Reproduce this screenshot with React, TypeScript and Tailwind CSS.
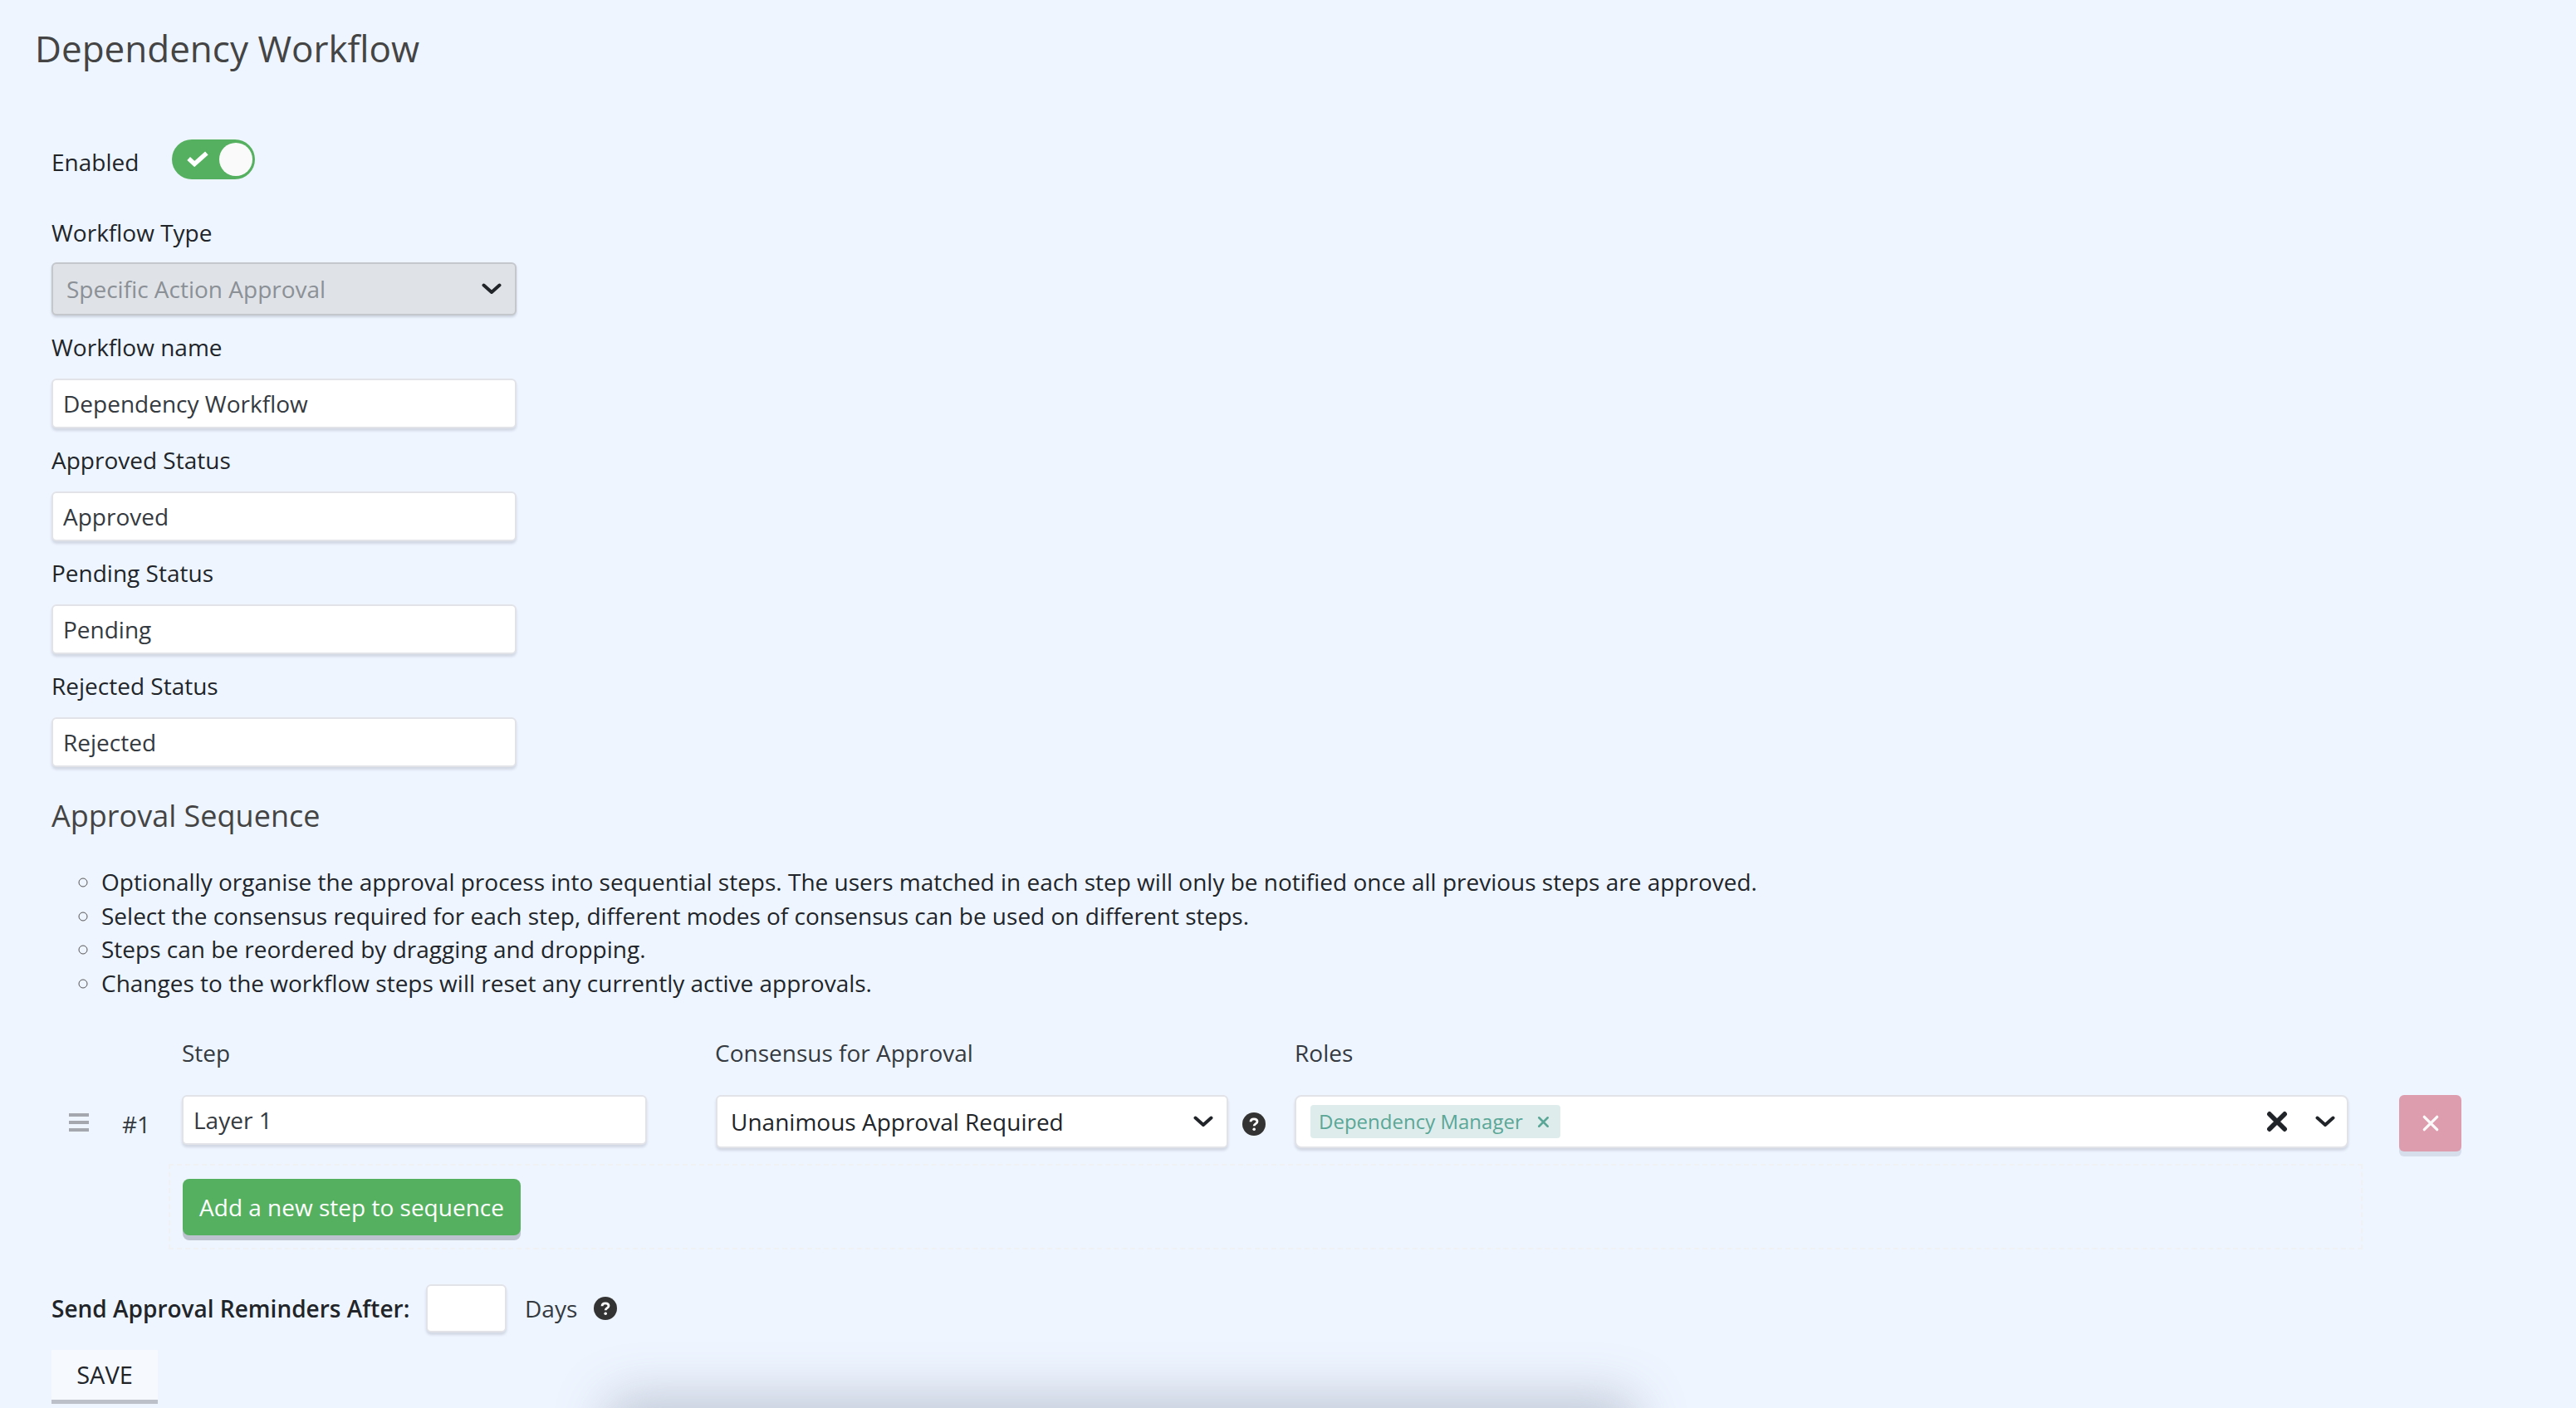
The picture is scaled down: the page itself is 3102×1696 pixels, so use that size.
import React from 'react';

const inputClass = 'block w-full h-[60px] rounded-[6px] border-2 border-[#e1e3e8] bg-white px-[12px] text-[28px] text-[#343a40] shadow-[0_3px_3px_rgba(40,50,70,0.14)] outline-none';

const Chevron = ({ className = '' }: { className?: string }) => (
  <svg viewBox="0 0 24 14" className={className} fill="none" stroke="#212529" strokeWidth="4" strokeLinecap="round" strokeLinejoin="round">
    <path d="M2.5 2.5 12 11 21.5 2.5" />
  </svg>
);

const Cross = ({ className = '', color = '#212529', width = 4 }: { className?: string; color?: string; width?: number }) => (
  <svg viewBox="0 0 20 20" className={className} fill="none" stroke={color} strokeWidth={width} strokeLinecap="round">
    <path d="M3 3 17 17M17 3 3 17" />
  </svg>
);

const HelpIcon = ({ className = '' }: { className?: string }) => (
  <svg viewBox="0 0 28 28" className={className}>
    <circle cx="14" cy="14" r="14" fill="#333333" />
    <path d="M10 11.2C10 8.9 11.8 7.8 14 7.8 16.3 7.8 18 9 18 11 18 13.6 14.2 13.7 14.2 16.2" fill="none" stroke="#ffffff" strokeWidth="2.8" />
    <circle cx="14.2" cy="20.2" r="1.8" fill="#ffffff" />
  </svg>
);

const TextField = ({ label, value }: { label: string; value: string }) => (
  <div>
    <label className="flex h-[76px] items-center text-[28px] text-[#212529]">{label}</label>
    <input className={inputClass} defaultValue={value} />
  </div>
);

const notes = [
  'Optionally organise the approval process into sequential steps. The users matched in each step will only be notified once all previous steps are approved.',
  'Select the consensus required for each step, different modes of consensus can be used on different steps.',
  'Steps can be reordered by dragging and dropping.',
  'Changes to the workflow steps will reset any currently active approvals.',
];

export default function App() {
  return (
    <div className="relative h-[1696px] w-[3102px] overflow-hidden bg-[#eef5ff] font-['Open_Sans',sans-serif] text-[#212529]">
      <h1 className="h-[166px] pl-[42px] pt-[27px] text-[44px] leading-[62px] font-normal text-[#444444]">Dependency Workflow</h1>

      <div className="pl-[62px]">
        <div className="flex h-[52px] items-center">
          <span className="mt-[6px] w-[145px] text-[28px]">Enabled</span>
          <div className="flex h-[48px] w-[100px] items-center justify-between rounded-full bg-[#55b160] pl-[18px] pr-[3px]">
            <svg viewBox="0 0 24 18" className="mb-[2px] h-[20px] w-[26px]" fill="none" stroke="#ffffff" strokeWidth="5">
              <path d="M2 9 8.5 15 22 3" />
            </svg>
            <div className="h-[40px] w-[40px] rounded-full bg-[#fafafa]" />
          </div>
        </div>

        <div className="w-[560px]">
          <label className="flex h-[98px] items-center pt-[26px] text-[28px]">Workflow Type</label>
          <div className="flex h-[64px] items-center justify-between rounded-[6px] border-2 border-[#c4c7cc] bg-[#dfe2e7] pl-[16px] pr-[16px] text-[28px] text-[#8b9096] shadow-[0_2px_3px_rgba(40,50,70,0.18)]">
            <span>Specific Action Approval</span>
            <Chevron className="h-[14px] w-[24px]" />
          </div>
          <TextField label="Workflow name" value="Dependency Workflow" />
          <TextField label="Approved Status" value="Approved" />
          <TextField label="Pending Status" value="Pending" />
          <TextField label="Rejected Status" value="Rejected" />
        </div>

        <h2 className="mt-[34px] text-[36px] leading-[50px] font-normal text-[#444444]">Approval Sequence</h2>

        <ul className="mt-[34px] list-[circle] pl-[60px] text-[28px] leading-[40.5px] marker:text-[#555555]">
          {notes.map(n => <li key={n}>{n}</li>)}
        </ul>

        <div className="mt-[44px] grid grid-cols-[157px_560px_82px_616px_82px_1268px] text-[28px] leading-[40px] text-[#343a40]">
          <div />
          <div>Step</div>
          <div />
          <div>Consensus for Approval</div>
          <div />
          <div>Roles</div>
        </div>

        <div className="mt-[31px] flex items-start">
          <div className="flex h-[66px] w-[157px] items-center">
            <div className="ml-[21px] flex w-[24px] flex-col gap-[5px]">
              <div className="h-[4px] bg-[#a4a7ae]" />
              <div className="h-[4px] bg-[#a4a7ae]" />
              <div className="h-[4px] bg-[#a4a7ae]" />
            </div>
            <span className="ml-[40px] pt-[3px] text-[28px] text-[#343a40]">#1</span>
          </div>
          <input className={inputClass + ' !w-[560px]'} defaultValue="Layer 1" />
          <div className="ml-[83px] flex h-[64px] w-[617px] items-center justify-between rounded-[6px] border-2 border-[#e1e3e8] bg-white pl-[16px] pr-[16px] text-[28px] shadow-[0_3px_3px_rgba(40,50,70,0.14)]">
            <span>Unanimous Approval Required</span>
            <Chevron className="h-[14px] w-[24px]" />
          </div>
          <div className="flex h-[64px] w-[80px] items-center pl-[17px] pt-[6px]">
            <HelpIcon className="h-[28px] w-[28px]" />
          </div>
          <div className="flex h-[64px] w-[1269px] items-center rounded-[8px] border-2 border-[#e1e3e8] bg-white pl-[17px] pr-[14px] shadow-[0_3px_3px_rgba(40,50,70,0.14)]">
            <div className="flex h-[40px] items-center gap-[17px] rounded-[4px] bg-[#deedeb] pl-[10px] pr-[13px] text-[24px] text-[#5aa697]">
              <span>Dependency Manager</span>
              <Cross className="h-[15px] w-[15px]" color="#5aa697" width={3.4} />
            </div>
            <Cross className="ml-auto h-[26px] w-[26px]" width={4.4} />
            <Chevron className="ml-[33px] h-[14px] w-[24px]" />
          </div>
          <button className="ml-[61px] flex h-[68px] w-[75px] items-center justify-center rounded-[6px] bg-[#dd9dae] shadow-[0_6px_0_rgba(50,60,90,0.12)]">
            <Cross className="h-[22px] w-[22px]" color="#fafafa" width={3} />
          </button>
        </div>

        <div className="ml-[141px] mt-[15px] h-[103px] w-[2642px] border-2 border-dashed border-[#f0f1f3] pl-[15px] pt-[16px]">
          <button className="h-[68px] w-[407px] rounded-[8px] bg-[#55b160] text-[28px] text-white shadow-[0_6px_0_#bcc2ce]">Add a new step to sequence</button>
        </div>

        <div className="mt-[42px] flex h-[58px] items-center">
          <span className="w-[451px] text-[28px] font-semibold">Send Approval Reminders After:</span>
          <input className={inputClass + ' !w-[97px] !h-[58px]'} />
          <span className="ml-[22px] text-[28px] text-[#343a40]">Days</span>
          <HelpIcon className="ml-[20px] h-[28px] w-[28px]" />
        </div>

        <button className="mt-[21px] h-[60px] w-[128px] bg-[#f6f9fe] text-[29px] text-[#212529] shadow-[0_5px_0_#bcc0c8]">SAVE</button>
      </div>

      {/* floating bar sits just under the fold, only its shadow shows */}
      <div className="absolute left-[760px] top-[1712px] h-[60px] w-[1180px] rounded-[8px] bg-[#b5bac4] shadow-[0_0_60px_30px_rgba(120,130,150,0.38)]" />
    </div>
  );
}
